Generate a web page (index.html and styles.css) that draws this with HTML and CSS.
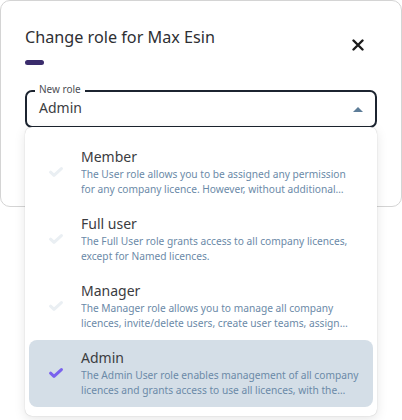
FILE: index.html
```html
<!DOCTYPE html>
<html lang="en">
<head>
<meta charset="utf-8">
<title>Change role</title>
<link rel="stylesheet" href="styles.css">
</head>
<body>
<div class="dialog">
  <div class="header">
    <h1 class="title">Change role for Max Esin</h1>
    <button class="close" aria-label="Close">
      <svg width="12" height="12" viewBox="0 0 12 12"><path d="M1.5 1.5L10.5 10.5M10.5 1.5L1.5 10.5" stroke="#1b1b1b" stroke-width="2.4" stroke-linecap="round"/></svg>
    </button>
  </div>
  <div class="bar"></div>
  <div class="field">
    <span class="field-label">New role</span>
    <span class="field-value">Admin</span>
    <span class="arrow"></span>
  </div>
</div>
<div class="menu">
  <div class="item">
    <svg class="check" width="14" height="10" viewBox="0 0 14 10"><path d="M1.6 5.2L5 8.4L12.4 1.6" fill="none" stroke-width="3" stroke-linecap="round" stroke-linejoin="round"/></svg>
    <div class="item-text">
      <div class="item-title">Member</div>
      <div class="item-desc">The User role allows you to be assigned any permission for any company licence. However, without additional permissions you can only use your own licences.</div>
    </div>
  </div>
  <div class="item">
    <svg class="check" width="14" height="10" viewBox="0 0 14 10"><path d="M1.6 5.2L5 8.4L12.4 1.6" fill="none" stroke-width="3" stroke-linecap="round" stroke-linejoin="round"/></svg>
    <div class="item-text">
      <div class="item-title">Full user</div>
      <div class="item-desc">The Full User role grants access to all company licences, except for Named licences.</div>
    </div>
  </div>
  <div class="item">
    <svg class="check" width="14" height="10" viewBox="0 0 14 10"><path d="M1.6 5.2L5 8.4L12.4 1.6" fill="none" stroke-width="3" stroke-linecap="round" stroke-linejoin="round"/></svg>
    <div class="item-text">
      <div class="item-title">Manager</div>
      <div class="item-desc">The Manager role allows you to manage all company licences, invite/delete users, create user teams, assign permissions to users and teams.</div>
    </div>
  </div>
  <div class="item selected">
    <svg class="check" width="14" height="10" viewBox="0 0 14 10"><path d="M1.6 5.2L5 8.4L12.4 1.6" fill="none" stroke-width="3" stroke-linecap="round" stroke-linejoin="round"/></svg>
    <div class="item-text">
      <div class="item-title">Admin</div>
      <div class="item-desc">The Admin User role enables management of all company licences and grants access to use all licences, with the exception of Named licences.</div>
    </div>
  </div>
</div>
</body>
</html>
```

FILE: styles.css
```css
* { box-sizing: border-box; }

html, body {
  margin: 0;
  padding: 0;
  background: #ffffff;
  font-family: "Noto Sans", "Open Sans", sans-serif;
}

.dialog {
  width: 402px;
  height: 207px;
  border: 1px solid #d4d4d4;
  border-radius: 10px;
  padding: 24px 24px 0 24px;
  background: #ffffff;
}

.header {
  display: flex;
  align-items: flex-start;
  justify-content: space-between;
}

.title {
  margin: 0;
  font-size: 16.2px;
  line-height: 24px;
  font-weight: 400;
  color: #2e2f33;
}

.close {
  border: 0;
  background: none;
  padding: 0;
  margin: 14px 13px 0 0;
  width: 12px;
  height: 12px;
  display: flex;
}

.bar {
  width: 19px;
  height: 5px;
  border-radius: 3px;
  background: #3a2c6c;
  margin-top: 9px;
}

.field {
  position: relative;
  margin-top: 25px;
  height: 38px;
  border: 2px solid #1c2430;
  border-radius: 7px;
  padding: 6px 12px 8px 12px;
  display: flex;
  align-items: flex-start;
}

.field-label {
  position: absolute;
  left: 8px;
  top: -10px;
  padding: 0 4px;
  background: #ffffff;
  font-size: 10px;
  line-height: 15px;
  color: #4d4f55;
}

.field-value {
  font-size: 14px;
  line-height: 20px;
  color: #3c3d42;
  flex: 1;
}

.arrow {
  width: 0;
  height: 0;
  border-left: 5px solid transparent;
  border-right: 5px solid transparent;
  border-bottom: 5px solid #5d7d98;
  margin: 9px 0 0 0;
}

.menu {
  position: absolute;
  left: 25px;
  top: 127px;
  width: 352px;
  height: 289px;
  padding: 12px 4px 9px 4px;
  background: #ffffff;
  border-radius: 7px;
  box-shadow: 0 0 1px rgba(0, 0, 0, 0.28), 0 3px 12px rgba(0, 0, 0, 0.10);
  display: flex;
  flex-direction: column;
}

.item {
  display: flex;
  align-items: center;
  height: 67px;
  padding: 8px 14px 9px 20px;
  border-radius: 8px;
}

.item.selected {
  background: #d4dee7;
}

.check {
  flex: none;
  margin-right: 18px;
  stroke: #eaeff3;
}

.item.selected .check {
  stroke: #7a62ee;
}

.item-text {
  flex: 1;
  min-width: 0;
}

.item-title {
  font-size: 14px;
  line-height: 20px;
  color: #3b3c41;
}

.item-desc {
  font-size: 10.2px;
  line-height: 15px;
  color: #6b8aa8;
  display: -webkit-box;
  -webkit-line-clamp: 2;
  -webkit-box-orient: vertical;
  overflow: hidden;
}
```
